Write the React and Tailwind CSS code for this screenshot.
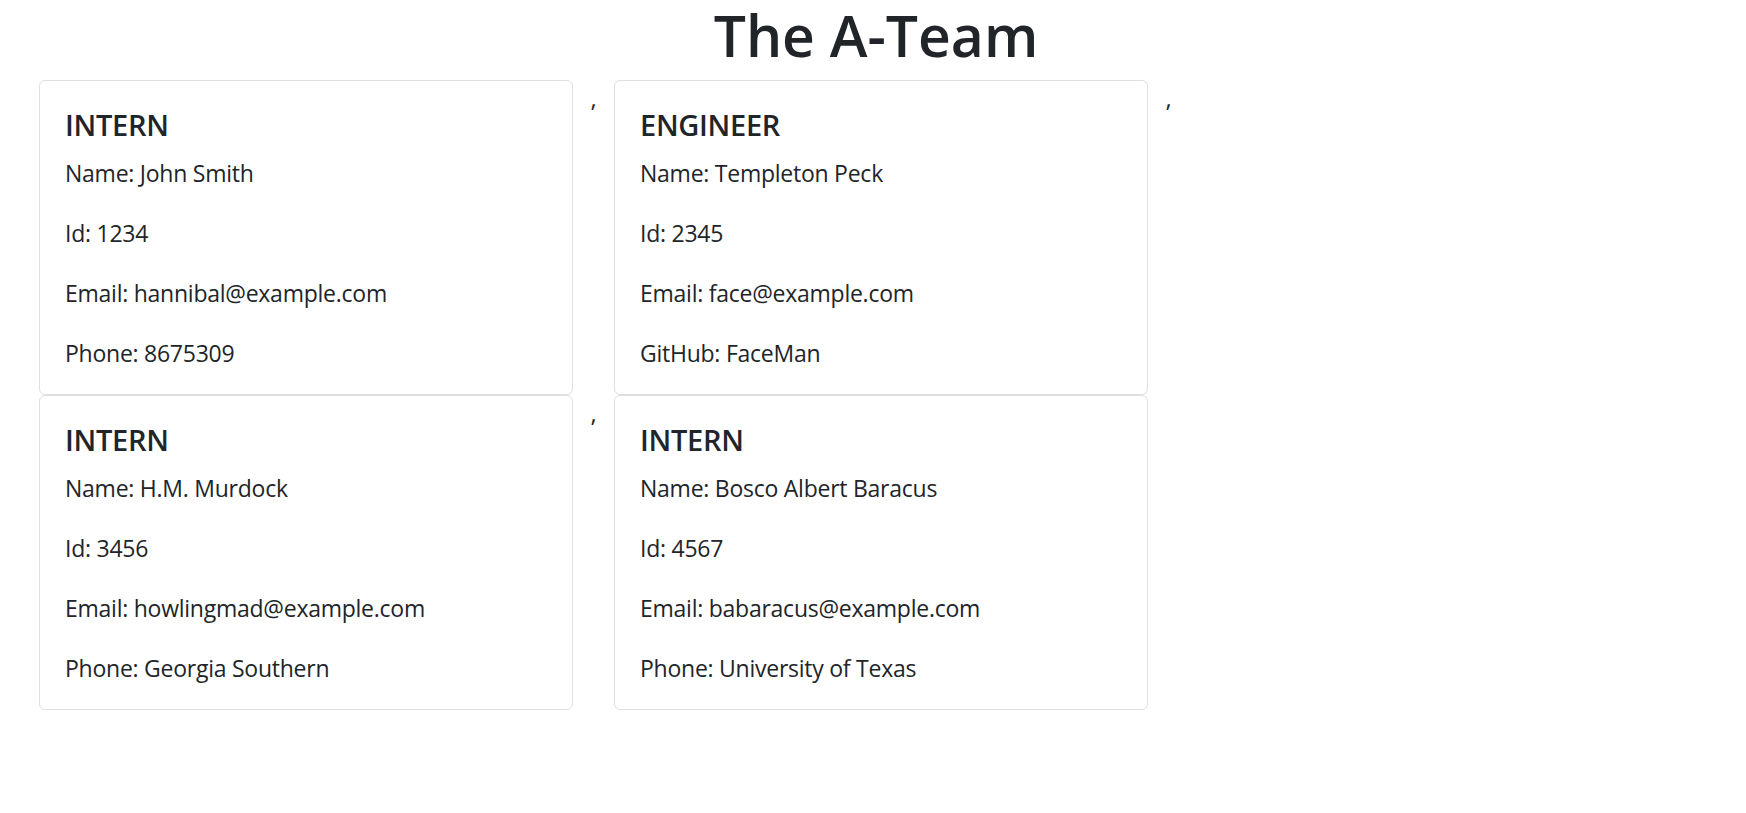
import React from "react";

const members = [
  { role: "INTERN", name: "John Smith", id: "1234", email: "hannibal@example.com", extra: "Phone: 8675309" },
  { role: "ENGINEER", name: "Templeton Peck", id: "2345", email: "face@example.com", extra: "GitHub: FaceMan" },
  { role: "INTERN", name: "H.M. Murdock", id: "3456", email: "howlingmad@example.com", extra: "Phone: Georgia Southern" },
  { role: "INTERN", name: "Bosco Albert Baracus", id: "4567", email: "babaracus@example.com", extra: "Phone: University of Texas" },
];

function Card({ m }) {
  return (
    <div className="w-[534px] shrink-0 border border-[#dfdfdf] rounded-[6px] bg-white pt-[26px] pb-[23px] px-[25px]">
      <h5 className="text-[29px] tracking-[-0.3px] leading-[36px] font-semibold mb-[12px]">{m.role}</h5>
      <p className="text-[23px] tracking-[-0.25px] leading-[36px] mb-[24px]">Name: {m.name}</p>
      <p className="text-[23px] tracking-[-0.25px] leading-[36px] mb-[24px]">Id: {m.id}</p>
      <p className="text-[23px] tracking-[-0.25px] leading-[36px] mb-[24px]">Email: {m.email}</p>
      <p className="text-[23px] tracking-[-0.25px] leading-[36px]">{m.extra}</p>
    </div>
  );
}

function Comma() {
  return <div className="w-[41px] shrink-0 text-center text-[24px] leading-[36px]">,</div>;
}

export default function App() {
  return (
    <div
      className="min-h-screen bg-white text-[#212529]"
      style={{ fontFamily: '"Open Sans", "Noto Sans", Arial, sans-serif' }}
    >
      <h1 className="text-center text-[57px] leading-[70px] font-semibold h-[80px] pl-[6px]">The A-Team</h1>
      <div className="px-[39px] flex flex-col">
        <div className="flex items-start">
          <Card m={members[0]} />
          <Comma />
          <Card m={members[1]} />
          <Comma />
        </div>
        <div className="flex items-start">
          <Card m={members[2]} />
          <Comma />
          <Card m={members[3]} />
        </div>
      </div>
    </div>
  );
}
